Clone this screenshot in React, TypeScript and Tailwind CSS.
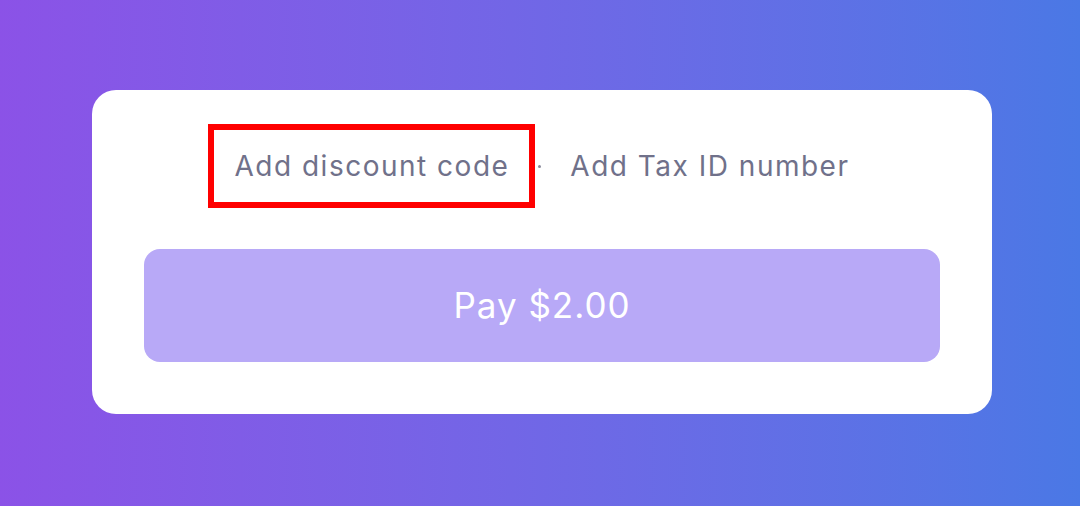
export default function App() {
    return (
        <div
            className="flex h-[506px] w-[1080px] items-center justify-center bg-gradient-to-r from-[#8b52e7] to-[#4a78e5] pl-[4px]"
            style={{ fontFamily: 'Inter, "Noto Sans", sans-serif' }}
        >
            <div className="-mt-[2px] flex w-[900px] flex-col items-center rounded-[24px] bg-white px-[52px] pb-[52px] pt-[40px]">
                <div className="flex items-center">
                    <a className="flex h-[72px] items-center px-[20px] text-[28px] tracking-[1.5px] text-[#70718a] outline-[6px] outline-solid outline-[#ff0000]">
                        Add discount code
                    </a>
                    <span className="mx-[9px] h-[3px] w-[3px] rounded-full bg-[#8a8b9c]" />
                    <a className="flex h-[72px] items-center px-[20px] text-[28px] tracking-[1.5px] text-[#70718a]">
                        Add Tax ID number
                    </a>
                </div>
                <button
                    type="button"
                    className="mt-[47px] flex h-[113px] w-full items-center justify-center rounded-[16px] bg-[#b8a9f7] text-[35px] tracking-[1px] text-white"
                >
                    Pay $2.00
                </button>
            </div>
        </div>
    )
}
